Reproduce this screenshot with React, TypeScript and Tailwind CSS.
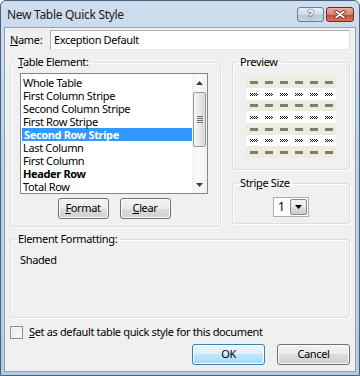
import React from 'react';

const elements = [
  { name: 'Whole Table' },
  { name: 'First Column Stripe' },
  { name: 'Second Column Stripe' },
  { name: 'First Row Stripe' },
  { name: 'Second Row Stripe', selected: true },
  { name: 'Last Column' },
  { name: 'First Column' },
  { name: 'Header Row', bold: true },
  { name: 'Total Row' },
];

const previewRows = [12, 12, 11, 12, 12, 11, 12];

const btn =
  'h-[21px] w-[51px] rounded-[3px] border border-[#707070] bg-[linear-gradient(#f2f2f2_0%,#ebebeb_50%,#dddddd_50%,#cfcfcf_100%)] shadow-[inset_0_0_0_1px_#fbfbfb] flex items-center justify-center';

const GroupBox: React.FC<{ label: React.ReactNode; className?: string; children: React.ReactNode }> = ({
  label,
  className = '',
  children,
}) => (
  <fieldset className={`border border-[#d5dfe5] rounded-[3px] shadow-[inset_1px_1px_0_#fff,1px_1px_0_#fff] ${className}`}>
    <legend className="ml-[4px] px-[3px] leading-[16px]">{label}</legend>
    {children}
  </fieldset>
);

const Arrow = ({ up }: { up?: boolean }) => (
  <svg width="7" height="4" viewBox="0 0 7 4">
    <polygon points={up ? '3.5,0 7,4 0,4' : '0,0 7,0 3.5,4'} fill="#3d3d3d" />
  </svg>
);

const Stipple = () => (
  <svg width="8" height="3" viewBox="0 0 8 3" shapeRendering="crispEdges">
    {[0, 1, 2].map((r) =>
      [0, 1, 2, 3].map((c) => (
        <rect key={`${r}-${c}`} x={c * 2 + (r % 2)} y={r} width="1" height="1" fill="#1a1a1a" />
      ))
    )}
  </svg>
);

export default function App() {
  return (
    <div className="w-[360px] h-[376px] font-['Noto_Sans',sans-serif] text-[11px] tracking-[-0.35px] text-black">
      <div className="w-full h-full flex flex-col border border-[#4a6078] rounded-t-[6px] bg-[linear-gradient(180deg,#cfdeee_0%,#bfd3e8_40%,#b3cbe3_100%)] px-[3px] pb-[3px]">
        {/* Title bar */}
        <div className="h-[26px] flex items-center">
          <span className="pl-[3px] text-[12px] tracking-[-0.3px] text-[#1b1b1b] leading-none mt-[1px]">New Table Quick Style</span>
          <div className="ml-auto mr-[2px] flex gap-[2px] mt-[1px]">
            <div className="w-[27px] h-[15px] rounded-[3px] border border-[#6a7c90] bg-[linear-gradient(#e6eef6_0%,#cfdbe8_50%,#b4c6d9_51%,#c6d6e6_100%)] flex items-center justify-center">
              <span className="text-[12px] font-bold leading-none text-white [text-shadow:0_0_2px_#2d3f55,0_0_1px_#2d3f55]">?</span>
            </div>
            <div className="w-[28px] h-[15px] rounded-[3px] border border-[#6e2a1c] bg-[linear-gradient(#eab3a5_0%,#d97b66_50%,#c4492d_51%,#d8775c_100%)] flex items-center justify-center">
              <svg width="12" height="9" viewBox="0 0 12 9">
                <path d="M2 1.5 L10 7.5 M10 1.5 L2 7.5" stroke="#5a1f14" strokeWidth="3.4" strokeLinecap="round" />
                <path d="M2 1.5 L10 7.5 M10 1.5 L2 7.5" stroke="#fff" strokeWidth="1.8" strokeLinecap="round" />
              </svg>
            </div>
          </div>
        </div>

        {/* Client area */}
        <div className="flex-1 flex flex-col bg-[#f0f0f0] border border-[#8ea3b8] px-[5px] pt-[2px]">
          {/* Name */}
          <div className="flex items-center h-[20px]">
            <span className="w-[40px]">
              <span className="underline">N</span>ame:
            </span>
            <div className="w-[300px] h-[20px] bg-white border border-[#abadb3] border-b-[#e3e9ef] border-r-[#dbdfe6] flex items-center pl-[3px]">
              Exception Default
            </div>
          </div>

          {/* Main row */}
          <div className="flex mt-[4px]">
            <GroupBox
              className="w-[211px]"
              label={
                <>
                  <span className="underline">T</span>able Element:
                </>
              }
            >
              <div className="pl-[9px] pt-[3px] pb-[7px]">
                <div className="w-[188px] h-[121px] border border-[#828790] bg-white flex">
                  <div className="flex-1 pt-[2px]">
                    {elements.map((el) => (
                      <div
                        key={el.name}
                        className={`h-[13px] leading-[13px] pl-[2px] whitespace-nowrap ${
                          el.selected ? 'bg-[#3399ff] text-white font-bold ml-[1px] pl-[1px]' : ''
                        } ${el.bold ? 'font-bold' : ''}`}
                      >
                        {el.name}
                      </div>
                    ))}
                  </div>
                  {/* Scrollbar */}
                  <div className="w-[15px] flex flex-col bg-[linear-gradient(90deg,#f2f2f2,#fbfbfb_40%,#f0f0f0)]">
                    <div className="h-[18px] flex items-center justify-center">
                      <Arrow up />
                    </div>
                    <div className="h-[55px] mx-[1px] rounded-[2px] border border-[#9a9a9a] bg-[linear-gradient(90deg,#f6f6f6,#e9e9e9_50%,#d9d9d9)] flex items-center justify-center">
                      <div className="flex flex-col gap-[1px]">
                        {[0, 1, 2, 3].map((i) => (
                          <div key={i} className="w-[6px] h-[1px] bg-[#6f6f6f]" />
                        ))}
                      </div>
                    </div>
                    <div className="flex-1" />
                    <div className="h-[17px] flex items-center justify-center">
                      <Arrow />
                    </div>
                  </div>
                </div>
                <div className="w-[188px] flex justify-center gap-[11px] mt-[4px]">
                  <button className={btn}>
                    <span>
                      <span className="underline">F</span>ormat
                    </span>
                  </button>
                  <button className={btn}>
                    <span>
                      <span className="underline">C</span>lear
                    </span>
                  </button>
                </div>
              </div>
            </GroupBox>

            <div className="ml-[11px] w-[118px] flex flex-col">
              <GroupBox label="Preview">
                <div className="flex justify-center pt-[6px] pb-[11px]">
                  <div className="w-[90px] flex flex-col">
                    {previewRows.map((h, i) => (
                      <div
                        key={i}
                        style={{ height: h }}
                        className={`flex items-center justify-between pl-[4px] pr-[3px] ${
                          i % 2 === 0 ? 'bg-[#eeece1]' : 'bg-white'
                        }`}
                      >
                        {[0, 1, 2, 3, 4, 5].map((c) =>
                          i % 2 === 0 ? (
                            <div key={c} className="w-[8px] h-[3px] bg-[#7f7e6e]" />
                          ) : (
                            <Stipple key={c} />
                          )
                        )}
                      </div>
                    ))}
                  </div>
                </div>
              </GroupBox>

              <GroupBox
                className="mt-[5px]"
                label={
                  <>
                    Stri<span className="underline">p</span>e Size
                  </>
                }
              >
                <div className="flex justify-center pt-[6px] pb-[6px]">
                  <div className="w-[36px] h-[20px] bg-white border border-[#abadb3] flex items-center">
                    <span className="pl-[4px] text-[12px] flex-1">1</span>
                    <div className="w-[17px] h-[16px] mr-[1px] rounded-[2px] border border-[#8a8a8a] bg-[linear-gradient(#f2f2f2_0%,#ebebeb_50%,#dddddd_50%,#cfcfcf_100%)] flex items-center justify-center">
                      <svg width="7" height="4" viewBox="0 0 7 4">
                        <polygon points="0,0 7,0 3.5,4" fill="#000" />
                      </svg>
                    </div>
                  </div>
                </div>
              </GroupBox>
            </div>
          </div>

          {/* Element Formatting */}
          <GroupBox className="mt-[4px]" label="Element Formatting:">
            <div className="h-[70px] pl-[9px] pt-[5px] leading-[15px]">Shaded</div>
          </GroupBox>

          {/* Checkbox */}
          <div className="flex items-center mt-[8px] h-[13px]">
            <div className="w-[13px] h-[13px] border border-[#8e8f8f] bg-[linear-gradient(135deg,#e9e9e9,#fbfbfb)] shadow-[inset_0_0_0_1px_#f4f4f4]" />
            <span className="ml-[6px]">
              <span className="underline">S</span>et as default table quick style for this document
            </span>
          </div>

          {/* Dialog buttons */}
          <div className="flex justify-end gap-[12px] mt-[5px]">
            <button className="h-[21px] w-[73px] rounded-[3px] border border-[#3c7fb1] bg-[linear-gradient(#eaf6fd_0%,#d9f0fc_50%,#bee6fd_50%,#a7d9f5_100%)] shadow-[inset_0_0_0_1px_#fbfdfe] flex items-center justify-center">
              OK
            </button>
            <button className={btn.replace('w-[51px]', 'w-[73px]')}>Cancel</button>
          </div>
        </div>
      </div>
    </div>
  );
}
